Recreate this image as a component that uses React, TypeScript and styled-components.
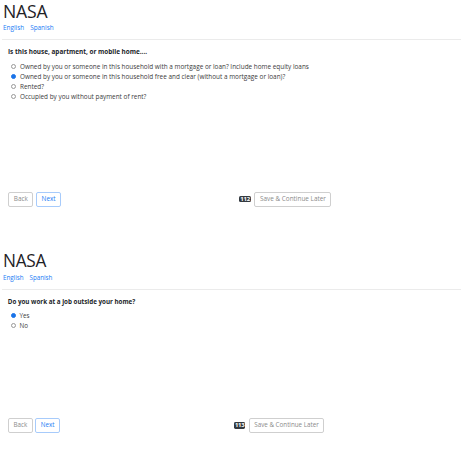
import React from "react";
import styled, { createGlobalStyle } from "styled-components";

const Global = createGlobalStyle`
  html, body { margin: 0; padding: 0; background: #fff; }
  body { font-family: "Open Sans", "Noto Sans", "Liberation Sans", sans-serif; color: #212529; }
  #root { width: 461px; overflow: hidden; }
`;

const u = (n: number) => `calc(${n} * var(--u))`;

const Panel = styled.section<{ $u: number; $h: number }>`
  --u: ${(p) => p.$u}px;
  height: ${(p) => p.$h}px;
  display: flex;
  flex-direction: column;
`;

const Title = styled.h1`
  margin: 0 0 0 ${u(3)};
  font-size: ${u(17.6)};
  line-height: ${u(22)};
  font-weight: 500;
  letter-spacing: ${u(-0.2)};
  color: #1e2226;
`;

const Langs = styled.nav`
  display: flex;
  gap: ${u(6)};
  margin: ${u(1.3)} 0 0 ${u(3)};
  font-size: ${u(6.4)};
  line-height: ${u(10)};
`;

const LangLink = styled.a`
  color: #1a7cf5;
  text-decoration: none;
`;

const Divider = styled.hr`
  margin: ${u(6)} 0 0 ${u(2)};
  border: 0;
  border-top: 1px solid #ebebeb;
  height: 0;
`;

const Question = styled.p`
  margin: ${u(7)} 0 0 ${u(8)};
  font-size: ${u(6.4)};
  line-height: ${u(10)};
  font-weight: 700;
  color: #212529;
`;

const Options = styled.div`
  display: flex;
  flex-direction: column;
  margin: ${u(4.4)} 0 0 ${u(11.2)};
`;

const Option = styled.label`
  display: flex;
  align-items: center;
  gap: ${u(3.6)};
  height: ${u(10)};
  font-size: ${u(6.4)};
  color: #3a3a3a;
  white-space: nowrap;
`;

const Radio = styled.input.attrs({ type: "radio" })`
  appearance: none;
  margin: 0;
  width: ${u(5.2)};
  height: ${u(5.2)};
  border-radius: 50%;
  border: 1px solid #999;
  background: #fff;
  box-sizing: border-box;
  &:checked {
    border-color: #1a73e8;
    background: #1a73e8;
  }
`;

const Footer = styled.div`
  display: flex;
  align-items: center;
  margin: ${u(90)} 0 0 ${u(8.3)};
`;

const LeftGroup = styled.div`
  display: flex;
  gap: ${u(2.7)};
  width: ${u(231)};
`;

const RightGroup = styled.div`
  display: flex;
  align-items: center;
  gap: ${u(3.6)};
`;

const Button = styled.button<{ $tone: "gray" | "blue" }>`
  box-sizing: border-box;
  height: ${u(15)};
  padding: 0 ${u(4.5)};
  border: 1px solid ${(p) => (p.$tone === "blue" ? "#a7cbfb" : "#cfcfcf")};
  border-radius: ${u(2)};
  background: #fff;
  font-family: inherit;
  font-size: ${u(6.4)};
  color: ${(p) => (p.$tone === "blue" ? "#1a7cf5" : "#8a8a8a")};
  line-height: 1;
`;

const Badge = styled.span`
  display: inline-flex;
  align-items: center;
  justify-content: center;
  width: ${u(11.6)};
  height: ${u(6.4)};
  border-radius: ${u(1.5)};
  background: #343a40;
  color: #fff;
  font-size: ${u(6)};
  font-weight: 700;
  letter-spacing: ${u(-0.2)};
  line-height: 1;
`;

type Screen = {
  u: number;
  h: number;
  question: string;
  options: string[];
  checked: number;
  page: number;
};

const screens: Screen[] = [
  {
    u: 1,
    h: 250.4,
    question: "Is this house, apartment, or mobile home....",
    options: [
      "Owned by you or someone in this household with a mortgage or loan? Include home equity loans",
      "Owned by you or someone in this household free and clear (without a mortgage or loan)?",
      "Rented?",
      "Occupied by you without payment of rent?",
    ],
    checked: 1,
    page: 112,
  },
  {
    u: 0.978,
    h: 214.6,
    question: "Do you work at a job outside your home?",
    options: ["Yes", "No"],
    checked: 0,
    page: 113,
  },
];

function SurveyPanel({ s, idx }: { s: Screen; idx: number }) {
  return (
    <Panel $u={s.u} $h={s.h}>
      <Title>NASA</Title>
      <Langs>
        <LangLink href="#">English</LangLink>
        <LangLink href="#">Spanish</LangLink>
      </Langs>
      <Divider />
      <Question>{s.question}</Question>
      <Options>
        {s.options.map((o, i) => (
          <Option key={o}>
            <Radio name={`q${idx}`} defaultChecked={i === s.checked} />
            {o}
          </Option>
        ))}
      </Options>
      <Footer>
        <LeftGroup>
          <Button $tone="gray">Back</Button>
          <Button $tone="blue">Next</Button>
        </LeftGroup>
        <RightGroup>
          <Badge>{s.page}</Badge>
          <Button $tone="gray">Save &amp; Continue Later</Button>
        </RightGroup>
      </Footer>
    </Panel>
  );
}

export default function App() {
  return (
    <>
      <Global />
      {screens.map((s, i) => (
        <SurveyPanel key={i} s={s} idx={i} />
      ))}
    </>
  );
}
